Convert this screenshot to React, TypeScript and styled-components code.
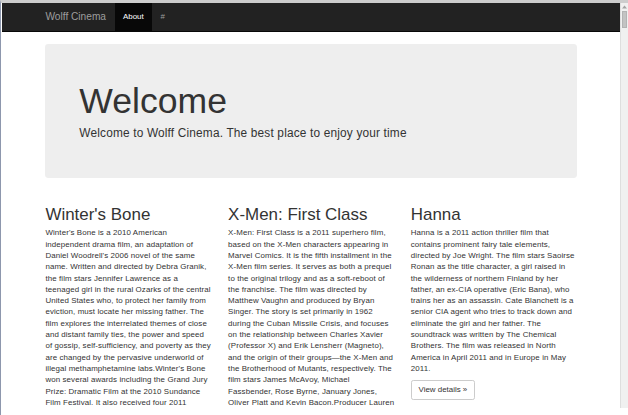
import React from "react";
import styled, { createGlobalStyle } from "styled-components";

const K = 0.565;
const s = (n: number) => `${+(n * K).toFixed(2)}px`;

const Global = createGlobalStyle`
  html, body { margin: 0; padding: 0; background: #fff; }
  body {
    font-family: "Liberation Sans", Arial, Helvetica, sans-serif;
    color: #333;
  }
  * { box-sizing: border-box; }
`;

const Frame = styled.div`
  width: 628px;
  height: 415px;
  overflow: hidden;
  display: flex;
  border-top: 3px solid #cdcdcd;
  border-left: 1px solid #8d97ad;
  padding-bottom: 7px;
  background: #fff;
`;

const Viewport = styled.div`
  flex: 1;
  min-width: 0;
  height: 100%;
  overflow: hidden;
  padding-left: 1px;
`;

const Scrollbar = styled.div`
  width: 8px;
  flex: none;
  border-left: 1px solid #dedede;
  background: #f0f0f0;
  display: flex;
  flex-direction: column;
  align-items: center;
  padding-top: 2px;
`;

const Thumb = styled.div`
  width: 5px;
  height: 17px;
  margin-top: 2px;
  background: #c3c3c3;
  border: 1px solid #b3b3b3;
`;

const Navbar = styled.nav`
  background: #222;
  border-bottom: 1px solid #080808;
`;

const Container = styled.div`
  width: ${s(970)};
  margin: 0 auto;
  padding: 0 ${s(15)};
`;

const NavInner = styled(Container)`
  display: flex;
  height: ${s(50)};
`;

const Brand = styled.a`
  margin-left: -${s(15)};
  padding: ${s(15)};
  font-size: ${s(18)};
  line-height: ${s(20)};
  color: #9d9d9d;
  text-decoration: none;
`;

const NavLink = styled.a<{ $active?: boolean }>`
  padding: ${s(15)};
  font-size: ${s(14)};
  line-height: ${s(20)};
  text-decoration: none;
  color: ${(p) => (p.$active ? "#fff" : "#9d9d9d")};
  background: ${(p) => (p.$active ? "#080808" : "transparent")};
`;

const Main = styled(Container)`
  padding-top: ${s(20)};
`;

const Jumbotron = styled.div`
  padding: ${s(48)} ${s(60)};
  margin-bottom: 16px;
  background: #eee;
  border-radius: ${s(6)};
`;

const Title = styled.h1`
  font-size: ${s(63)};
  line-height: 1.1;
  font-weight: 500;
  margin: ${s(20)} 0 3.6px;
`;

const Lead = styled.p`
  font-size: ${s(21)};
  line-height: ${s(30)};
  font-weight: 200;
  letter-spacing: 0.17px;
  margin: 0 0 9.5px;
`;

const Row = styled.div`
  display: grid;
  grid-template-columns: repeat(3, 1fr);
  column-gap: ${s(30)};
`;

const Col = styled.div`
  min-width: 0;
`;

const FilmTitle = styled.h2`
  font-size: ${s(30)};
  line-height: 1.1;
  font-weight: 500;
  margin: ${s(20)} 0 3.2px;
`;

const Text = styled.p`
  font-size: ${s(14)};
  line-height: ${s(20)};
  letter-spacing: 0.1px;
  white-space: nowrap;
  margin: 0 0 ${s(10)};
`;

const Actions = styled.p`
  margin: 0 0 ${s(10)};
  line-height: ${s(20)};
`;

const Button = styled.a`
  display: inline-block;
  padding: ${s(6)} ${s(12)};
  font-size: ${s(14)};
  line-height: ${s(20)};
  color: #333;
  background: #fff;
  border: 1px solid #ccc;
  border-radius: ${s(4)};
  text-decoration: none;
`;

const films = [
  {
    title: "Winter's Bone",
    lines: [
      "Winter's Bone is a 2010 American",
      "independent drama film, an adaptation of",
      "Daniel Woodrell's 2006 novel of the same",
      "name. Written and directed by Debra Granik,",
      "the film stars Jennifer Lawrence as a",
      "teenaged girl in the rural Ozarks of the central",
      "United States who, to protect her family from",
      "eviction, must locate her missing father. The",
      "film explores the interrelated themes of close",
      "and distant family ties, the power and speed",
      "of gossip, self-sufficiency, and poverty as they",
      "are changed by the pervasive underworld of",
      "illegal methamphetamine labs.Winter's Bone",
      "won several awards including the Grand Jury",
      "Prize: Dramatic Film at the 2010 Sundance",
      "Film Festival. It also received four 2011",
      "Academy Award nominations, including Best",
      "Picture, Best Actress for Lawrence, Best",
      "Supporting Actor for John Hawkes and Best",
      "Adapted Screenplay.",
    ],
  },
  {
    title: "X-Men: First Class",
    lines: [
      "X-Men: First Class is a 2011 superhero film,",
      "based on the X-Men characters appearing in",
      "Marvel Comics. It is the fifth installment in the",
      "X-Men film series. It serves as both a prequel",
      "to the original trilogy and as a soft-reboot of",
      "the franchise. The film was directed by",
      "Matthew Vaughn and produced by Bryan",
      "Singer. The story is set primarily in 1962",
      "during the Cuban Missile Crisis, and focuses",
      "on the relationship between Charles Xavier",
      "(Professor X) and Erik Lensherr (Magneto),",
      "and the origin of their groups\u2014the X-Men and",
      "the Brotherhood of Mutants, respectively. The",
      "film stars James McAvoy, Michael",
      "Fassbender, Rose Byrne, January Jones,",
      "Oliver Platt and Kevin Bacon.Producer Lauren",
      "Shuler Donner first thought of a prequel",
      "based on the young X-Men during the",
      "production of X2.",
    ],
  },
  {
    title: "Hanna",
    lines: [
      "Hanna is a 2011 action thriller film that",
      "contains prominent fairy tale elements,",
      "directed by Joe Wright. The film stars Saoirse",
      "Ronan as the title character, a girl raised in",
      "the wilderness of northern Finland by her",
      "father, an ex-CIA operative (Eric Bana), who",
      "trains her as an assassin. Cate Blanchett is a",
      "senior CIA agent who tries to track down and",
      "eliminate the girl and her father. The",
      "soundtrack was written by The Chemical",
      "Brothers. The film was released in North",
      "America in April 2011 and in Europe in May",
      "2011.",
    ],
  },
];

export default function App() {
  return (
    <>
      <Global />
      <Frame>
        <Viewport>
          <Navbar>
            <NavInner>
              <Brand href="#">Wolff Cinema</Brand>
              <NavLink href="#" $active>
                About
              </NavLink>
              <NavLink href="#">#</NavLink>
            </NavInner>
          </Navbar>
          <Main>
            <Jumbotron>
              <Title>Welcome</Title>
              <Lead>Welcome to Wolff Cinema. The best place to enjoy your time</Lead>
            </Jumbotron>
            <Row>
              {films.map((f) => (
                <Col key={f.title}>
                  <FilmTitle>{f.title}</FilmTitle>
                  <Text>
                    {f.lines.map((l, i) => (
                      <React.Fragment key={i}>
                        {i > 0 && <br />}
                        {l}
                      </React.Fragment>
                    ))}
                  </Text>
                  <Actions>
                    <Button href="#">View details &raquo;</Button>
                  </Actions>
                </Col>
              ))}
            </Row>
          </Main>
        </Viewport>
        <Scrollbar>
          <svg width="5" height="4" viewBox="0 0 5 4">
            <path d="M2.5 0.5 L5 3.5 L0 3.5 Z" fill="#a3a3a3" />
          </svg>
          <Thumb />
        </Scrollbar>
      </Frame>
    </>
  );
}
